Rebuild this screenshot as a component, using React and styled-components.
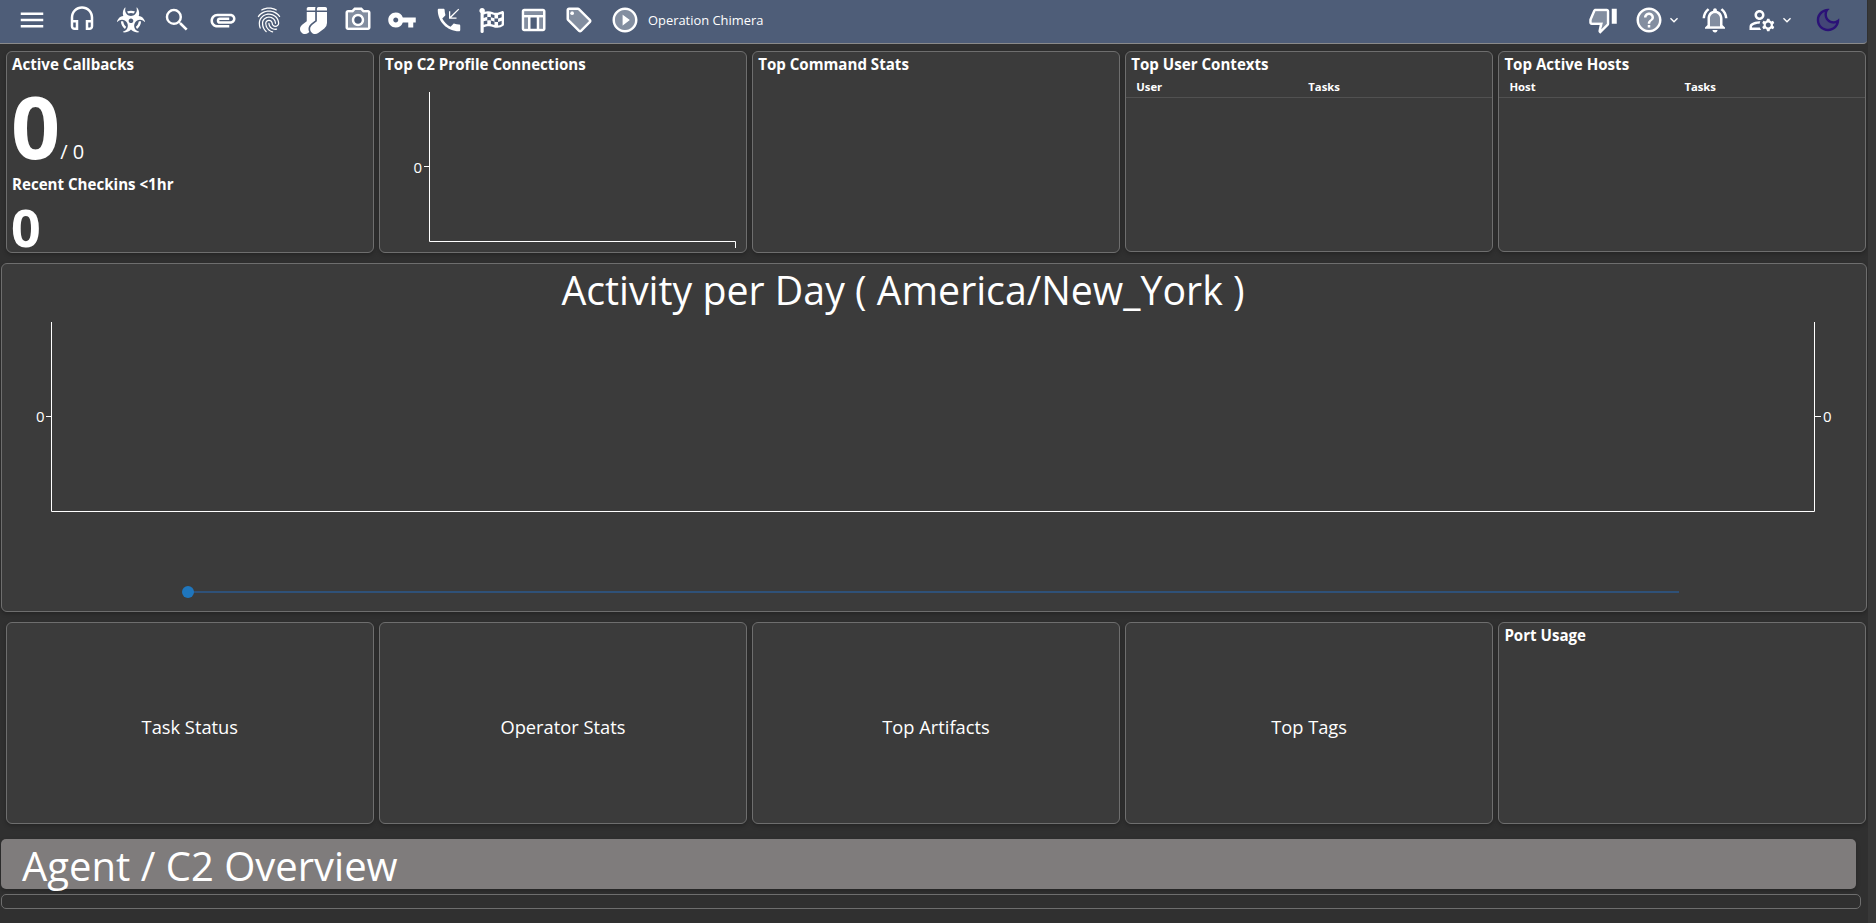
import React from 'react';
import styled, { createGlobalStyle } from 'styled-components';
import {
  MdMenu,
  MdOutlineHeadset,
  MdSearch,
  MdAttachment,
  MdFingerprint,
  MdVpnKey,
  MdPhoneCallback,
  MdExpandMore,
  MdOutlineManageAccounts,
} from 'react-icons/md';
import { FaBiohazard, FaSocks, FaFlagCheckered } from 'react-icons/fa';

const GlobalStyle = createGlobalStyle`
  html, body {
    margin: 0;
    height: 100%;
    background: #303030;
    color: #fff;
    font-family: "Open Sans", "Noto Sans", "Liberation Sans", sans-serif;
    overflow: hidden;
  }
`;

const Shell = styled.div`
  display: grid;
  grid-template-columns: 1868px 8px;
  height: 923px;
`;

const Page = styled.div`
  display: flex;
  flex-direction: column;
  min-width: 0;
`;

const ScrollTrack = styled.div`
  background: #383838;
`;

const TopBar = styled.header`
  display: flex;
  align-items: center;
  width: 1867px;
  height: 44px;
  padding: 0 0 3px 9px;
  box-sizing: border-box;
  background: #4e5d78;
  border-bottom: 1px solid #8a8a8a;
  border-bottom-right-radius: 4px;
`;

const BarButton = styled.span`
  display: flex;
  align-items: center;
  justify-content: center;
  flex: none;
  width: ${(p) => p.$w || 46}px;
  height: 40px;
  color: ${(p) => p.$color || '#fff'};
  margin-right: ${(p) => p.$mr || 0}px;
  svg {
    display: block;
  }
`;

const OperationName = styled.span`
  margin-left: 2px;
  font-size: 12.9px;
  white-space: nowrap;
`;

const BarSpacer = styled.div`
  flex: 1;
`;

const CardRow = styled.section`
  display: grid;
  grid-template-columns: repeat(5, 367.6px);
  column-gap: 5.5px;
  align-items: start;
  padding-left: 6px;
  margin-top: ${(p) => p.$top}px;
`;

const Card = styled.div`
  height: ${(p) => p.$h || 202}px;
  box-sizing: border-box;
  overflow: hidden;
  background: #3b3b3b;
  border: 1px solid #6e6e6e;
  border-radius: 6px;
  box-shadow: 0 2px 4px rgba(0, 0, 0, 0.25);
`;

const CardTitle = styled.h3`
  margin: 0;
  padding: 2px 0 0 5px;
  font-size: 15.1px;
  line-height: 20px;
  font-weight: 700;
`;

const SubTitle = styled(CardTitle)`
  margin-top: 3px;
`;

const BigStat = styled.div`
  display: flex;
  align-items: baseline;
  margin-top: 9px;
  padding-left: 4px;
  height: 86px;
`;

const BigNumber = styled.span`
  font-size: ${(p) => p.$size}px;
  line-height: ${(p) => p.$line}px;
  font-weight: 700;
`;

const StatTotal = styled.span`
  font-size: 20px;
  font-weight: 400;
`;

const SmallStat = styled.div`
  padding-left: 4px;
  margin-top: 10px;
  height: 46px;
  line-height: 46px;
`;

const ChartSvg = styled.svg`
  display: block;
  margin-top: ${(p) => p.$top || 0}px;
`;

const AxisLabel = styled.text`
  fill: #fff;
  font-size: 15px;
  font-family: "Open Sans", sans-serif;
`;

const TableHead = styled.div`
  display: grid;
  grid-template-columns: ${(p) => p.$first}px 1fr;
  padding: 4.5px 0 3.5px 10px;
  border-bottom: 1px solid #515151;
  font-size: 11.3px;
  line-height: 15px;
  font-weight: 700;
`;

const ActivityCard = styled.section`
  width: 1866px;
  height: 349px;
  margin: 10px 0 0 1px;
  box-sizing: border-box;
  background: #3b3b3b;
  border: 1px solid #6e6e6e;
  border-radius: 6px;
  box-shadow: 0 2px 4px rgba(0, 0, 0, 0.25);
  overflow: hidden;
`;

const ActivityTitle = styled.h2`
  margin: 0;
  text-align: center;
  font-size: 39.3px;
  line-height: 52px;
  font-weight: 400;
  transform: translateX(-31px);
`;

const CenteredCard = styled(Card)`
  display: flex;
  align-items: center;
  justify-content: center;
  padding-top: 6px;
  font-size: 18.3px;
`;

const SectionBar = styled.div`
  width: 1855px;
  height: 50px;
  margin: 15px 0 0 1px;
  box-sizing: border-box;
  padding: 2px 0 0 21px;
  background: #7f7c7c;
  border-radius: 5px;
  font-size: 40px;
  line-height: 50px;
  box-shadow: 0 2px 4px rgba(0, 0, 0, 0.25);
`;

const EmptyStrip = styled.div`
  width: 1860px;
  height: 15px;
  margin: 5px 0 0 1px;
  box-sizing: border-box;
  border: 1px solid #6e6e6e;
  border-radius: 5px;
`;

// two tone icons, drawn with a faint fill under the outline
const TwoTone = ({ size = 30, fill, d, extra }) => (
  <svg width={size} height={size} viewBox="0 0 24 24" fill="currentColor">
    <path opacity=".3" fillRule="evenodd" d={fill} />
    <path d={d} />
    {extra}
  </svg>
);

const CameraIcon = () => (
  <TwoTone
    fill="M20 18H4V6h4.05l.59-.65L9.88 4h4.24l1.24 1.35.59.65H20v12zM12 7c-2.76 0-5 2.24-5 5s2.24 5 5 5 5-2.24 5-5-2.24-5-5-5z"
    d="M20 4h-3.17L15 2H9L7.17 4H4c-1.1 0-2 .9-2 2v12c0 1.1.9 2 2 2h16c1.1 0 2-.9 2-2V6c0-1.1-.9-2-2-2zm0 14H4V6h4.05l.59-.65L9.88 4h4.24l1.24 1.35.59.65H20v12zM12 7c-2.76 0-5 2.24-5 5s2.24 5 5 5 5-2.24 5-5-2.24-5-5-5zm0 8c-1.65 0-3-1.35-3-3s1.35-3 3-3 3 1.35 3 3-1.35 3-3 3z"
  />
);

const TableIcon = () => (
  <TwoTone
    fill="M5 5h15v3H5zM17 10h3v9h-3zM5 10h3v9H5z"
    d="M20 3H5c-1.1 0-2 .9-2 2v14c0 1.1.9 2 2 2h15c1.1 0 2-.9 2-2V5c0-1.1-.9-2-2-2zm0 2v3H5V5h15zm-5 14h-5v-9h5v9zM5 10h3v9H5v-9zm12 9v-9h3v9h-3z"
  />
);

const TagIcon = () => (
  <TwoTone
    fill="M11.17 4H4v7.17L12.83 20 20 12.83zM6.5 8C5.67 8 5 7.33 5 6.5S5.67 5 6.5 5 8 5.67 8 6.5 7.33 8 6.5 8z"
    d="M21.41 11.41l-8.83-8.83C12.21 2.21 11.7 2 11.17 2H4c-1.1 0-2 .9-2 2v7.17c0 .53.21 1.04.59 1.41l8.83 8.83c.78.78 2.05.78 2.83 0l7.17-7.17c.78-.78.78-2.04-.01-2.83zM12.83 20L4 11.17V4h7.17L20 12.83 12.83 20z"
    extra={<circle cx="6.5" cy="6.5" r="1.5" />}
  />
);

const PlayIcon = () => (
  <TwoTone
    fill="M12 4c-4.41 0-8 3.59-8 8s3.59 8 8 8 8-3.59 8-8-3.59-8-8-8zm-2 12.5v-9l6 4.5-6 4.5z"
    d="M12 2C6.48 2 2 6.48 2 12s4.48 10 10 10 10-4.48 10-10S17.52 2 12 2zm0 18c-4.41 0-8-3.59-8-8s3.59-8 8-8 8 3.59 8 8-3.59 8-8 8zm-2-3.5l6-4.5-6-4.5v9z"
  />
);

const ThumbDownIcon = () => (
  <TwoTone
    fill="M3 12v2h9l-1.34 5.34L15 15V5H6z"
    d="M6 3c-.83 0-1.54.5-1.84 1.22l-3.02 7.05c-.09.23-.14.47-.14.73v2c0 1.1.9 2 2 2h6.31l-.95 4.57-.03.32c0 .41.17.79.44 1.06L9.83 23l6.59-6.59c.36-.36.58-.86.58-1.41V5c0-1.1-.9-2-2-2H6zm9 12l-4.34 4.34L12 14H3v-2l3-7h9v10zm4-12h4v12h-4z"
  />
);

const HelpIcon = () => (
  <TwoTone
    fill="M12 4c-4.41 0-8 3.59-8 8s3.59 8 8 8 8-3.59 8-8-3.59-8-8-8z"
    d="M12 2C6.48 2 2 6.48 2 12s4.48 10 10 10 10-4.48 10-10S17.52 2 12 2zm0 18c-4.41 0-8-3.59-8-8s3.59-8 8-8 8 3.59 8 8-3.59 8-8 8zm-1-4h2v2h-2zm1-10c-2.21 0-4 1.79-4 4h2c0-1.1.9-2 2-2s2 .9 2 2c0 2-3 1.75-3 5h2c0-2.25 3-2.5 3-5 0-2.21-1.79-4-4-4z"
  />
);

const BellIcon = () => (
  <TwoTone
    fill="M12 6.5c-2.49 0-4 2.02-4 4.5v6h8v-6c0-2.48-1.51-4.5-4-4.5z"
    d="M7.58 4.08L6.15 2.65C3.75 4.48 2.17 7.3 2.03 10.5h2c.15-2.65 1.51-4.97 3.55-6.42zm12.39 6.42h2c-.15-3.2-1.73-6.02-4.12-7.85l-1.42 1.43c2.02 1.45 3.39 3.77 3.54 6.42zM18 11c0-3.07-1.64-5.64-4.5-6.32V4c0-.83-.67-1.5-1.5-1.5s-1.5.67-1.5 1.5v.68C7.63 5.36 6 7.92 6 11v5l-2 2v1h16v-1l-2-2v-5zm-2 6H8v-6c0-2.48 1.51-4.5 4-4.5s4 2.02 4 4.5v6zm-4 5c.14 0 .27-.01.4-.04.65-.14 1.18-.58 1.44-1.18.1-.24.15-.5.15-.78h-4c.01 1.1.9 2 2.01 2z"
  />
);

const MoonIcon = () => (
  <TwoTone
    fill="M9.37 5.51C9.19 6.15 9.1 6.82 9.1 7.5c0 4.08 3.32 7.4 7.4 7.4.68 0 1.35-.09 1.99-.27C17.45 17.19 14.93 19 12 19c-3.86 0-7-3.14-7-7 0-2.93 1.81-5.45 4.37-6.49z"
    d="M9.37 5.51C9.19 6.15 9.1 6.82 9.1 7.5c0 4.08 3.32 7.4 7.4 7.4.68 0 1.35-.09 1.99-.27C17.45 17.19 14.93 19 12 19c-3.86 0-7-3.14-7-7 0-2.93 1.81-5.45 4.37-6.49zM12 3c-4.97 0-9 4.03-9 9s4.03 9 9 9 9-4.03 9-9c0-.46-.04-.92-.1-1.36-.98 1.37-2.58 2.26-4.4 2.26-2.98 0-5.4-2.42-5.4-5.4 0-1.81.89-3.42 2.26-4.4-.44-.06-.9-.1-1.36-.1z"
  />
);

const C2Chart = () => (
  <ChartSvg width="366" height="177">
    <path d="M49.5 18 V167.5 H355.5 V174" fill="none" stroke="#fff" strokeWidth="1" />
    <path d="M44 92.5 H49" stroke="#fff" strokeWidth="1" />
    <AxisLabel x="42" y="99" textAnchor="end">0</AxisLabel>
  </ChartSvg>
);

const ActivityChart = () => (
  <ChartSvg width="1864" height="288" $top={6}>
    <path d="M49.5 0 V189.5 H1812.5 V0" fill="none" stroke="#fff" strokeWidth="1" />
    <path d="M44 94.5 H49 M1813 94.5 H1819" stroke="#fff" strokeWidth="1" />
    <AxisLabel x="42.5" y="100" textAnchor="end">0</AxisLabel>
    <AxisLabel x="1821" y="100">0</AxisLabel>
    <path d="M186 270 H1677" stroke="#2f5178" strokeWidth="2" />
    <circle cx="186" cy="270" r="6" fill="#1f76bd" />
  </ChartSvg>
);

const App = () => (
  <>
    <GlobalStyle />
    <Shell>
      <Page>
        <TopBar>
          <BarButton $mr={4}><MdMenu size={30} /></BarButton>
          <BarButton $mr={3}><MdOutlineHeadset size={30} /></BarButton>
          <BarButton><FaBiohazard size={28} /></BarButton>
          <BarButton><MdSearch size={30} /></BarButton>
          <BarButton><MdAttachment size={30} /></BarButton>
          <BarButton><MdFingerprint size={30} /></BarButton>
          <BarButton $w={42}><FaSocks size={27} /></BarButton>
          <BarButton $w={48}><CameraIcon /></BarButton>
          <BarButton $w={40} $mr={6}><MdVpnKey size={30} /></BarButton>
          <BarButton $w={42}><MdPhoneCallback size={30} /></BarButton>
          <BarButton $w={42}><FaFlagCheckered size={25} /></BarButton>
          <BarButton $w={42} $mr={4}><TableIcon /></BarButton>
          <BarButton $w={42} $mr={4}><TagIcon /></BarButton>
          <BarButton $w={42}><PlayIcon /></BarButton>
          <OperationName>Operation Chimera</OperationName>
          <BarSpacer />
          <BarButton $mr={6}><ThumbDownIcon /></BarButton>
          <BarButton $w={34}><HelpIcon /></BarButton>
          <BarButton $w={16} $mr={10}><MdExpandMore size={18} /></BarButton>
          <BarButton $mr={7}><BellIcon /></BarButton>
          <BarButton $w={34}><MdOutlineManageAccounts size={30} /></BarButton>
          <BarButton $w={16} $mr={10}><MdExpandMore size={18} /></BarButton>
          <BarButton $color="#2b1277" $mr={16}><MoonIcon /></BarButton>
        </TopBar>

        <CardRow $top={7}>
          <Card>
            <CardTitle>Active Callbacks</CardTitle>
            <BigStat>
              <BigNumber $size={86} $line={86}>0</BigNumber>
              <StatTotal>/ 0</StatTotal>
            </BigStat>
            <SubTitle>Recent Checkins &lt;1hr</SubTitle>
            <SmallStat>
              <BigNumber $size={52} $line={46}>0</BigNumber>
            </SmallStat>
          </Card>
          <Card>
            <CardTitle>Top C2 Profile Connections</CardTitle>
            <C2Chart />
          </Card>
          <Card>
            <CardTitle>Top Command Stats</CardTitle>
          </Card>
          <Card $h={201}>
            <CardTitle>Top User Contexts</CardTitle>
            <TableHead $first={172}>
              <span>User</span>
              <span>Tasks</span>
            </TableHead>
          </Card>
          <Card $h={201}>
            <CardTitle>Top Active Hosts</CardTitle>
            <TableHead $first={175}>
              <span>Host</span>
              <span>Tasks</span>
            </TableHead>
          </Card>
        </CardRow>

        <ActivityCard>
          <ActivityTitle>Activity per Day ( America/New_York )</ActivityTitle>
          <ActivityChart />
        </ActivityCard>

        <CardRow $top={10}>
          <CenteredCard>Task Status</CenteredCard>
          <CenteredCard>Operator Stats</CenteredCard>
          <CenteredCard>Top Artifacts</CenteredCard>
          <CenteredCard>Top Tags</CenteredCard>
          <Card>
            <CardTitle>Port Usage</CardTitle>
          </Card>
        </CardRow>

        <SectionBar>Agent / C2 Overview</SectionBar>
        <EmptyStrip />
      </Page>
      <ScrollTrack />
    </Shell>
  </>
);

export default App;
